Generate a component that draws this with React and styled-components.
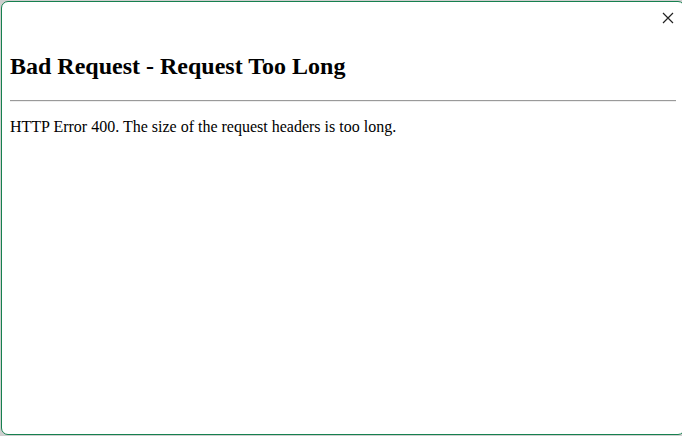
import React from "react";
import styled, { createGlobalStyle } from "styled-components";

const Global = createGlobalStyle`
  html, body { margin: 0; padding: 0; }
  body {
    width: 682px;
    height: 436px;
    overflow: hidden;
    background: #cfcfcf;
    font-family: "Liberation Serif", "Times New Roman", serif;
  }
`;

const Backdrop = styled.div`
  width: 682px;
  height: 436px;
  padding: 1px 0 0 1px;
  box-sizing: border-box;
  overflow: hidden;
`;

const Dialog = styled.div`
  width: 684px;
  height: 434px;
  box-sizing: border-box;
  background: #fff;
  border: 1px solid #16804f;
  border-radius: 7px;
  display: flex;
  flex-direction: column;
  overflow: hidden;
`;

const Header = styled.div`
  height: 31px;
  flex: none;
  display: flex;
  justify-content: flex-end;
  align-items: flex-start;
  padding: 9px 9px 0 0;
  box-sizing: border-box;
`;

const CloseButton = styled.button`
  width: 14px;
  height: 14px;
  padding: 0;
  border: 0;
  background: transparent;
  display: flex;
  align-items: center;
  justify-content: center;
  cursor: pointer;
`;

const Content = styled.div`
  flex: 1;
  padding: 0 8px;
  color: #000;
`;

const Title = styled.h2`
  font-size: 24px;
  font-weight: bold;
  margin: 20px 0 0;
  line-height: normal;
`;

const Rule = styled.hr`
  margin: 20px 0 0;
  border: 0;
  border-top: 1px solid #9a9a9a;
  border-bottom: 1px solid #eeeeee;
  height: 0;
`;

const Message = styled.p`
  font-size: 16px;
  margin: 16px 0 0;
`;

export default function App() {
  return (
    <>
      <Global />
      <Backdrop>
        <Dialog>
          <Header>
            <CloseButton aria-label="Close">
              <svg width="12" height="12" viewBox="0 0 12 12">
                <path d="M1 1 L11 11 M11 1 L1 11" stroke="#222" strokeWidth="1.2" fill="none" />
              </svg>
            </CloseButton>
          </Header>
          <Content>
            <Title>Bad Request - Request Too Long</Title>
            <Rule />
            <Message>HTTP Error 400. The size of the request headers is too long.</Message>
          </Content>
        </Dialog>
      </Backdrop>
    </>
  );
}
